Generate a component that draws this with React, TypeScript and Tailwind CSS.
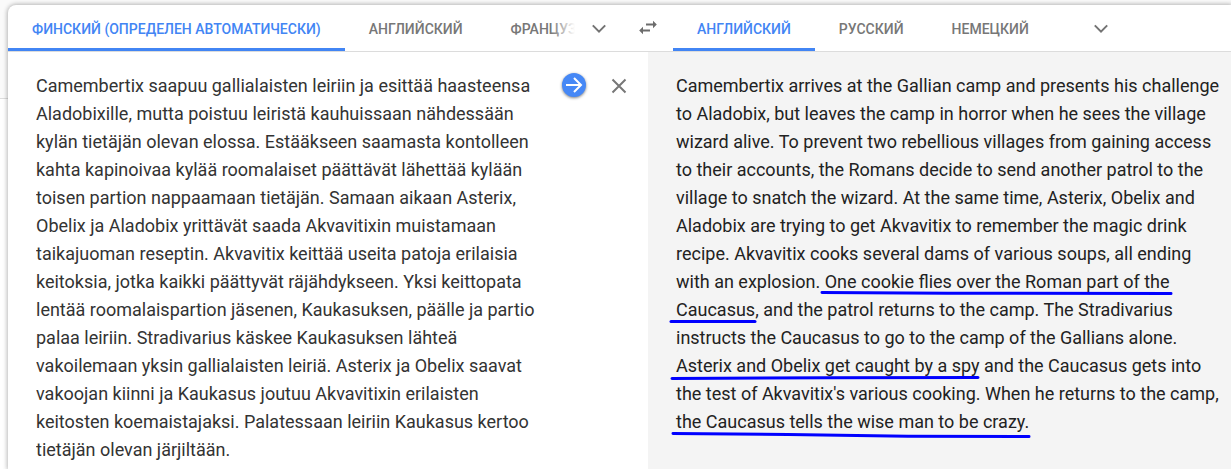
import { useState } from "react";

const SOURCE_TEXT =
  "Camembertix saapuu gallialaisten leiriin ja esittää haasteensa Aladobixille, mutta poistuu leiristä kauhuissaan nähdessään kylän tietäjän olevan elossa. Estääkseen saamasta kontolleen kahta kapinoivaa kylää roomalaiset päättävät lähettää kylään toisen partion nappaamaan tietäjän. Samaan aikaan Asterix, Obelix ja Aladobix yrittävät saada Akvavitixin muistamaan taikajuoman reseptin. Akvavitix keittää useita patoja erilaisia keitoksia, jotka kaikki päättyvät räjähdykseen. Yksi keittopata lentää roomalaispartion jäsenen, Kaukasuksen, päälle ja partio palaa leiriin. Stradivarius käskee Kaukasuksen lähteä vakoilemaan yksin gallialaisten leiriä. Asterix ja Obelix saavat vakoojan kiinni ja Kaukasus joutuu Akvavitixin erilaisten keitosten koemaistajaksi. Palatessaan leiriin Kaukasus kertoo tietäjän olevan järjiltään.";

const TARGET_TEXT =
  "Camembertix arrives at the Gallian camp and presents his challenge to Aladobix, but leaves the camp in horror when he sees the village wizard alive. To prevent two rebellious villages from gaining access to their accounts, the Romans decide to send another patrol to the village to snatch the wizard. At the same time, Asterix, Obelix and Aladobix are trying to get Akvavitix to remember the magic drink recipe. Akvavitix cooks several dams of various soups, all ending with an explosion. One cookie flies over the Roman part of the Caucasus, and the patrol returns to the camp. The Stradivarius instructs the Caucasus to go to the camp of the Gallians alone. Asterix and Obelix get caught by a spy and the Caucasus gets into the test of Akvavitix's various cooking. When he returns to the camp, the Caucasus tells the wise man to be crazy.";

const sourceLanguages = [
  "ФИНСКИЙ (ОПРЕДЕЛЕН АВТОМАТИЧЕСКИ)",
  "АНГЛИЙСКИЙ",
  "ФРАНЦУЗСКИЙ",
];
const targetLanguages = ["АНГЛИЙСКИЙ", "РУССКИЙ", "НЕМЕЦКИЙ"];

function LanguageTab({
  label,
  active,
  onClick,
}: {
  label: string;
  active: boolean;
  onClick: () => void;
}) {
  return (
    <button
      type="button"
      role="tab"
      aria-selected={active}
      onClick={onClick}
      className={`h-[46px] shrink-0 whitespace-nowrap border-b-3 px-6 pt-1 text-sm font-medium ${
        active
          ? "border-[#4285f4] text-[#4285f4]"
          : "border-transparent text-[#777777]"
      }`}
    >
      {label}
    </button>
  );
}

function MoreButton({ className }: { className: string }) {
  return (
    <button
      type="button"
      aria-label="Другие языки"
      className={`size-6 shrink-0 text-[#737373] ${className}`}
    >
      <svg viewBox="0 0 24 24" className="size-6" fill="none">
        <path d="M5.8 9.4l6.2 6.2 6.2-6.2" stroke="currentColor" strokeWidth="2" />
      </svg>
    </button>
  );
}

export default function App() {
  const [text, setText] = useState(SOURCE_TEXT);
  const [source, setSource] = useState(0);
  const [target, setTarget] = useState(0);

  return (
    <div className="flex min-h-screen flex-col overflow-hidden bg-white font-['Roboto',sans-serif]">
      {/* Page header band, the card overlaps it */}
      <div className="-mb-[94px] h-[99px] border-b border-[#dddddd] bg-[#fafafa]" />

      <main className="relative ml-2 flex flex-1 flex-col rounded-tl-lg bg-white shadow-[0_0_4px_1px_rgba(0,0,0,0.28)]">
        {/* Languages */}
        <div className="grid h-[47px] grid-cols-[640fr_583fr] border-b border-[#dcdcdc]">
          <div className="flex min-w-0 items-center">
            <div
              role="tablist"
              className="relative flex h-[46px] min-w-0 flex-1 overflow-hidden"
            >
              {sourceLanguages.map((label, i) => (
                <LanguageTab
                  key={label}
                  label={label}
                  active={i === source}
                  onClick={() => setSource(i)}
                />
              ))}
              <div className="pointer-events-none absolute inset-y-0 right-0 w-6 bg-linear-to-r from-transparent to-white" />
            </div>
            <MoreButton className="ml-3 mr-[25px]" />
            <button
              type="button"
              aria-label="Поменять языки местами"
              className="-mr-3 size-6 shrink-0 text-[#6c6c6c]"
            >
              <svg viewBox="0 0 24 24" className="size-6" fill="currentColor">
                <path d="M10 7.500h7V4.800l3.800 3.700L17 12.200V9.500h-7zM14 13.500H7v-2.700l-3.800 3.700L7 18.200v-2.700h7z" />
              </svg>
            </button>
          </div>
          <div className="flex min-w-0 items-center pl-[25px]">
            <div role="tablist" className="flex min-w-0 overflow-hidden">
              {targetLanguages.map((label, i) => (
                <LanguageTab
                  key={label}
                  label={label}
                  active={i === target}
                  onClick={() => setTarget(i)}
                />
              ))}
            </div>
            <MoreButton className="ml-9" />
          </div>
        </div>

        {/* Texts */}
        <div className="grid flex-1 grid-cols-[640fr_583fr]">
          <section className="flex min-w-0 items-start pl-7 pr-[17px] pt-5">
            <textarea
              aria-label="Исходный текст"
              spellCheck={false}
              value={text}
              onChange={(e) => setText(e.target.value)}
              className="field-sizing-content min-w-0 flex-1 resize-none overflow-hidden text-lg/7 text-[#333333] outline-none"
            />
            <button
              type="button"
              aria-label="Перевести"
              className="ml-3 mt-px size-6 shrink-0 rounded-full bg-[#4688f6] text-white shadow-[0_1px_3px_rgba(0,0,0,0.5)]"
            >
              <svg viewBox="0 0 24 24" className="size-6" fill="none">
                <path
                  d="M4 12h15M12 5l7 7-7 7"
                  stroke="currentColor"
                  strokeWidth="2"
                />
              </svg>
            </button>
            <button
              type="button"
              aria-label="Очистить"
              onClick={() => setText("")}
              className="ml-[21px] mt-0.5 size-6 shrink-0 text-[#777777]"
            >
              <svg viewBox="0 0 24 24" className="size-6" fill="none">
                <path
                  d="M5.5 5.500l13 13M18.500 5.500l-13 13"
                  stroke="currentColor"
                  strokeWidth="2"
                />
              </svg>
            </button>
          </section>

          <section className="relative min-w-0 bg-[#f4f4f4] pl-7 pr-2 pt-5">
            <p className="text-lg/7 text-[#222222]">{TARGET_TEXT}</p>
            {/* Pen marks over the mistranslated phrases */}
            <svg
              width="583"
              height="417"
              className="pointer-events-none absolute left-0 top-0"
              fill="none"
              stroke="#0000ff"
              strokeWidth="3"
              strokeLinecap="round"
            >
              <path d="M174 240.500L300 241.200L523 241.500" />
              <path d="M23 269.500H107" />
              <path d="M24 326.500L180 325.800L330 325.500" />
              <path d="M25 381.500L140 382.500L260 384.200L381 384.500" />
            </svg>
          </section>
        </div>
      </main>
    </div>
  );
}
